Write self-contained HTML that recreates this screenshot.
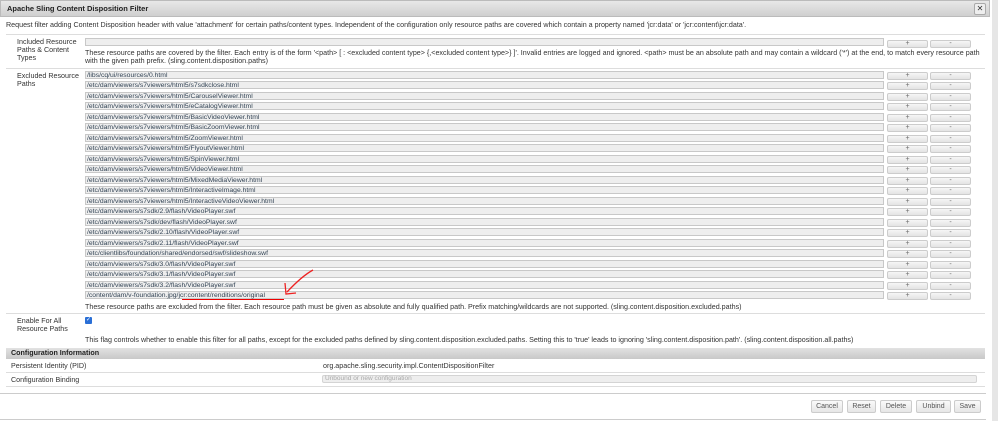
<!DOCTYPE html>
<html><head><style>
body{margin:0;width:998px;height:421px;background:#fff;font-family:"Liberation Sans",sans-serif;font-size:7.15px;color:#333;position:relative;overflow:hidden}
.a{position:absolute;white-space:nowrap}
.title{left:0;top:0;width:990px;height:17px;background:linear-gradient(#e8e8e8,#cfcfcf);border:1px solid #bbb;box-sizing:border-box;font-weight:bold;font-size:7.5px;line-height:16px;padding-left:6px;color:#222}
.x{right:12px;top:3px;width:10px;height:10px;border:1px solid #aaa;background:#eee;font-size:8px;line-height:9px;text-align:center;border-radius:2px}
.inp{left:85px;width:799px;height:8px;background:#eee;border:1px solid #c8c8c8;box-sizing:border-box;font-size:6.8px;line-height:7px;padding-left:1px;color:#345}
.btn{width:41px;height:8px;background:linear-gradient(#f6f6f6,#e3e3e3);border:1px solid #ccc;border-radius:2px;box-sizing:border-box;text-align:center;font-size:7px;line-height:6px;color:#666}
.hr{height:1px;background:#ddd}
.fb{top:400px;height:13px;border:1px solid #ccc;border-radius:2px;background:linear-gradient(#fafafa,#e6e6e6);box-sizing:border-box;text-align:center;line-height:11px;color:#555;font-size:7px}
</style></head><body>
<div class="a title">Apache Sling Content Disposition Filter</div>
<div class="a x">✕</div>
<div class="a" style="left:992px;top:0;width:6px;height:421px;background:#e6e6e6"></div>
<div class="a" style="left:6px;top:21px">Request filter adding Content Disposition header with value 'attachment' for certain paths/content types. Independent of the configuration only resource paths are covered which contain a property named 'jcr:data' or 'jcr:content\jcr:data'.</div>
<div class="a hr" style="left:6px;top:34px;width:979px"></div>
<div class="a" style="left:17px;top:38px;line-height:8px;white-space:normal;width:65px">Included Resource Paths &amp; Content Types</div>
<div class="a inp" style="top:38px"></div>
<div class="a btn" style="left:887px;top:40px">+</div><div class="a btn" style="left:930px;top:40px">-</div>
<div class="a" style="left:85px;top:49px;line-height:8px;white-space:normal;width:900px">These resource paths are covered by the filter. Each entry is of the form '&lt;path&gt; [ : &lt;excluded content type&gt; {,&lt;excluded content type&gt;} ]'. Invalid entries are logged and ignored. &lt;path&gt; must be an absolute path and may contain a wildcard ('*') at the end, to match every resource path with the given path prefix. (sling.content.disposition.paths)</div>
<div class="a hr" style="left:6px;top:68px;width:979px"></div>
<div class="a" style="left:17px;top:72px;line-height:8px;white-space:normal;width:65px">Excluded Resource Paths</div>
<div id="rows"></div>
<div class="a" style="left:85px;top:303px">These resource paths are excluded from the filter. Each resource path must be given as absolute and fully qualified path. Prefix matching/wildcards are not supported. (sling.content.disposition.excluded.paths)</div>
<div class="a" style="left:182px;top:299px;width:102px;height:1px;background:#e00"></div>
<svg class="a" style="left:282px;top:268px" width="34" height="30"><path d="M31 2 Q20 8 5 24" stroke="#e22" stroke-width="1.3" fill="none"/><path d="M3 15 L4 26 L14 25" stroke="#e22" stroke-width="1.3" fill="none"/></svg>
<div class="a hr" style="left:6px;top:313px;width:979px"></div>
<div class="a" style="left:17px;top:317px;line-height:8px;white-space:normal;width:65px">Enable For All Resource Paths</div>
<div class="a" style="left:85px;top:317px;width:7px;height:7px;background:#2a6fd6;border-radius:1px;color:#fff;font-size:6px;line-height:7px;text-align:center">✓</div>
<div class="a" style="left:85px;top:336px">This flag controls whether to enable this filter for all paths, except for the excluded paths defined by sling.content.disposition.excluded.paths. Setting this to 'true' leads to ignoring 'sling.content.disposition.path'. (sling.content.disposition.all.paths)</div>
<div class="a" style="left:6px;top:348px;width:979px;height:11px;background:linear-gradient(#e2e2e2,#c8c8c8);font-weight:bold;line-height:11px;padding-left:5px;box-sizing:border-box;color:#222">Configuration Information</div>
<div class="a" style="left:11px;top:362px">Persistent Identity (PID)</div>
<div class="a" style="left:323px;top:362px">org.apache.sling.security.impl.ContentDispositionFilter</div>
<div class="a hr" style="left:6px;top:372px;width:979px"></div>
<div class="a" style="left:11px;top:376px">Configuration Binding</div>
<div class="a" style="left:322px;top:375px;width:655px;height:8px;background:#eee;border:1px solid #d4d4d4;border-radius:2px;box-sizing:border-box;color:#aaa;font-size:6.5px;line-height:6px;padding-left:2px">Unbound or new configuration</div>
<div class="a hr" style="left:6px;top:386px;width:979px"></div>
<div class="a hr" style="left:0;top:393px;width:986px;background:#ccc"></div>
<div class="a fb" style="left:811px;width:32px">Cancel</div>
<div class="a fb" style="left:847px;width:29px">Reset</div>
<div class="a fb" style="left:880px;width:32px">Delete</div>
<div class="a fb" style="left:916px;width:35px">Unbind</div>
<div class="a fb" style="left:954px;width:27px">Save</div>
<div class="a" style="left:0;top:419px;width:986px;height:1px;background:#ccc"></div>
<script>
var p=["/libs/cq/ui/resources/0.html","/etc/dam/viewers/s7viewers/html5/s7sdkclose.html","/etc/dam/viewers/s7viewers/html5/CarouselViewer.html","/etc/dam/viewers/s7viewers/html5/eCatalogViewer.html","/etc/dam/viewers/s7viewers/html5/BasicVideoViewer.html","/etc/dam/viewers/s7viewers/html5/BasicZoomViewer.html","/etc/dam/viewers/s7viewers/html5/ZoomViewer.html","/etc/dam/viewers/s7viewers/html5/FlyoutViewer.html","/etc/dam/viewers/s7viewers/html5/SpinViewer.html","/etc/dam/viewers/s7viewers/html5/VideoViewer.html","/etc/dam/viewers/s7viewers/html5/MixedMediaViewer.html","/etc/dam/viewers/s7viewers/html5/InteractiveImage.html","/etc/dam/viewers/s7viewers/html5/InteractiveVideoViewer.html","/etc/dam/viewers/s7sdk/2.9/flash/VideoPlayer.swf","/etc/dam/viewers/s7sdk/dev/flash/VideoPlayer.swf","/etc/dam/viewers/s7sdk/2.10/flash/VideoPlayer.swf","/etc/dam/viewers/s7sdk/2.11/flash/VideoPlayer.swf","/etc/clientlibs/foundation/shared/endorsed/swf/slideshow.swf","/etc/dam/viewers/s7sdk/3.0/flash/VideoPlayer.swf","/etc/dam/viewers/s7sdk/3.1/flash/VideoPlayer.swf","/etc/dam/viewers/s7sdk/3.2/flash/VideoPlayer.swf","/content/dam/v-foundation.jpg/jcr:content/renditions/original"];
var h="";for(var i=0;i<p.length;i++){var t=Math.round(71+i*10.48);h+='<div class="a inp" style="top:'+t+'px">'+p[i]+'</div><div class="a btn" style="left:887px;top:'+(t+1)+'px">+</div><div class="a btn" style="left:930px;top:'+(t+1)+'px">-</div>';}
document.getElementById("rows").outerHTML=h;
</script>
</body></html>
